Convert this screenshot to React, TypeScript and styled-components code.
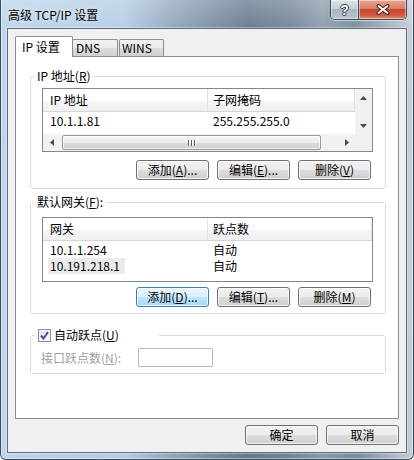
import React from 'react'
import styled, { createGlobalStyle } from 'styled-components'

const uiFont = `"Noto Sans CJK SC", "Noto Sans", sans-serif`

const GlobalStyle = createGlobalStyle`
  html, body {
    margin: 0;
    padding: 0;
  }
  body {
    font-family: ${uiFont};
    font-size: 12px;
    color: #000;
  }
`

const buttonFace = 'linear-gradient(#f2f2f2 0%, #ebebeb 50%, #dddddd 50%, #cfcfcf 100%)'
const buttonHot = 'linear-gradient(#eaf6fd 0%, #d9f0fc 50%, #bee6fd 50%, #a7d9f5 100%)'

// window chrome

const Frame = styled.div`
  width: 414px;
  height: 460px;
  box-sizing: border-box;
  display: flex;
  flex-direction: column;
  border: 1px solid #3c4a58;
  border-top: none;
  border-radius: 0 0 6px 6px;
  background:
    linear-gradient(180deg, rgba(255, 255, 255, 0.25) 0px, rgba(255, 255, 255, 0.05) 28px, rgba(255, 255, 255, 0) 100%),
    linear-gradient(90deg, #bcd4ec 0%, #b3cce5 30%, #90a5ba 42%, #65788c 60%, #718497 70%, #8c9bab 78%, #7b8b9c 86%, #a3b1bf 94%, #c4cfd9 100%);
  box-shadow:
    inset 1px 0 rgba(255, 255, 255, 0.45),
    inset -1px 0 rgba(255, 255, 255, 0.45),
    inset 0 -1px rgba(255, 255, 255, 0.45);
`

const TitleBar = styled.div`
  height: 28px;
  display: flex;
  align-items: flex-start;
  padding-left: 7px;
`

const Title = styled.div`
  margin-top: 7px;
  line-height: 16px;
  font-size: 12px;
  text-shadow: 0 0 6px rgba(255, 255, 255, 0.8);
`

const Captions = styled.div`
  display: flex;
  margin-left: auto;
  margin-right: 6px;
  height: 20px;
  box-sizing: border-box;
  border: 1px solid #3e4a57;
  border-top: none;
  border-radius: 0 0 5px 5px;
  overflow: hidden;
  box-shadow: 0 1px 0 rgba(255, 255, 255, 0.5);
`

const CaptionButton = styled.div<{ $w: number; $bg: string }>`
  width: ${(p) => p.$w}px;
  display: flex;
  align-items: center;
  justify-content: center;
  background: ${(p) => p.$bg};
  box-shadow: inset 0 0 0 1px rgba(255, 255, 255, 0.45);
  & + & {
    border-left: 1px solid #3e4a57;
  }
`

const HelpGlyph = styled.span`
  font-family: "Liberation Sans", Arial, sans-serif;
  font-weight: bold;
  font-size: 14px;
  line-height: 14px;
  color: #fff;
  text-shadow: 1px 0 #2f3a46, -1px 0 #2f3a46, 0 1px #2f3a46, 0 -1px #2f3a46;
`

const Client = styled.div`
  flex: 1;
  margin: 0 6px 6px;
  border: 1px solid #5e6d7d;
  box-shadow: 0 0 0 1px rgba(255, 255, 255, 0.35);
  background: #f0f0f0;
  padding: 7px;
  display: flex;
  flex-direction: column;
`

// tab control

const TabStrip = styled.div`
  display: flex;
  align-items: flex-end;
  height: 20px;
`

const Tab = styled.div<{ $active?: boolean; $w: number; $ml?: number; $pl: number }>`
  position: relative;
  z-index: ${(p) => (p.$active ? 2 : 1)};
  box-sizing: border-box;
  width: ${(p) => p.$w}px;
  height: ${(p) => (p.$active ? 21 : 17)}px;
  margin-left: ${(p) => p.$ml ?? 0}px;
  margin-bottom: ${(p) => (p.$active ? -1 : 0)}px;
  padding: ${(p) => (p.$active ? 2 : 0)}px 0 0 ${(p) => p.$pl}px;
  border: 1px solid #898c95;
  border-bottom: none;
  border-radius: 2px 2px 0 0;
  background: ${(p) => (p.$active ? '#fff' : buttonFace)};
  line-height: 16px;
  white-space: nowrap;
`

const Panel = styled.div`
  flex: 1;
  border: 1px solid #898c95;
  background: #fff;
  padding: 12px 12px 0 14px;
  display: flex;
  flex-direction: column;
`

// group boxes

const Group = styled.fieldset<{ $pad: string; $mt: number }>`
  margin: ${(p) => p.$mt}px 0 0;
  padding: ${(p) => p.$pad};
  border: 1px solid #d5dfe5;
  border-radius: 3px;
  min-width: 0;
`

const Legend = styled.legend<{ $ml: number; $w?: number }>`
  margin-left: ${(p) => p.$ml}px;
  padding: 0 3px;
  line-height: 14px;
  height: 14px;
  box-sizing: border-box;
  ${(p) => (p.$w ? `width: ${p.$w}px;` : '')}
  white-space: nowrap;
`

const LegendCheck = styled.span`
  display: flex;
  align-items: center;
  gap: 3px;
  height: 14px;
`

const CheckBox = styled.span`
  width: 13px;
  height: 13px;
  box-sizing: border-box;
  border: 1px solid #8e8f8f;
  background: linear-gradient(135deg, #dcdcdc, #ffffff);
  box-shadow: inset 0 0 0 1px #f4f4f4;
  display: inline-flex;
  align-items: center;
  justify-content: center;
`

// list views

const ListView = styled.div<{ $h: number; $scroll?: boolean }>`
  height: ${(p) => p.$h}px;
  box-sizing: border-box;
  border: 1px solid #828790;
  background: #fff;
  display: grid;
  grid-template-columns: ${(p) => (p.$scroll ? '1fr 17px' : '1fr')};
  grid-template-rows: ${(p) => (p.$scroll ? '1fr 17px' : '1fr')};
  overflow: hidden;
`

const ListBody = styled.div`
  overflow: hidden;
  min-width: 0;
`

const Header = styled.div`
  display: flex;
  height: 23px;
  box-sizing: border-box;
  border-bottom: 1px solid #d5d5d5;
  background: linear-gradient(#ffffff 0%, #ffffff 55%, #f4f5f7 55%, #eff0f2 100%);
`

const HeaderCell = styled.div<{ $w?: number; $pl: number }>`
  ${(p) => (p.$w ? `width: ${p.$w}px; flex: none;` : 'flex: 1;')}
  box-sizing: border-box;
  padding-left: ${(p) => p.$pl}px;
  line-height: 22px;
  border-right: 1px solid #e3e4e6;
  white-space: nowrap;
`

const Rows = styled.div`
  padding-top: 1px;
`

const Row = styled.div`
  display: flex;
  height: 16px;
  line-height: 16px;
`

const Cell = styled.div<{ $w?: number; $pl: number }>`
  ${(p) => (p.$w ? `width: ${p.$w}px; flex: none;` : 'flex: 1;')}
  box-sizing: border-box;
  padding-left: ${(p) => p.$pl}px;
  white-space: nowrap;
`

const Selected = styled.span`
  display: inline-block;
  margin-left: -2px;
  padding: 0 5px 0 2px;
  background: #ebebeb;
`

const VScroll = styled.div`
  display: flex;
  flex-direction: column;
  justify-content: space-between;
  background: #f1f1f1;
`

const HScroll = styled.div`
  display: flex;
  align-items: center;
  background: #f1f1f1;
`

const ArrowBox = styled.div`
  width: 17px;
  height: 17px;
  flex: none;
  display: flex;
  align-items: center;
  justify-content: center;
`

const Thumb = styled.div`
  width: 259px;
  height: 15px;
  margin-left: 2px;
  box-sizing: border-box;
  border: 1px solid #979797;
  border-radius: 2px;
  background: linear-gradient(#f5f5f5 0%, #ebebeb 50%, #dbdbdb 50%, #d0d0d0 100%);
  box-shadow: inset 0 0 0 1px rgba(255, 255, 255, 0.7);
  display: flex;
  align-items: center;
  justify-content: center;
  gap: 1px;
`

const Grip = styled.span`
  width: 1px;
  height: 6px;
  background: #5f5f5f;
  box-shadow: 1px 0 #fafafa;
  margin-right: 1px;
`

const Spacer = styled.div`
  flex: 1;
`

const Corner = styled.div`
  background: #f0f0f0;
`

// buttons and fields

const ButtonRow = styled.div<{ $mt: number; $pr?: number }>`
  display: flex;
  justify-content: flex-end;
  gap: 8px;
  margin-top: ${(p) => p.$mt}px;
  padding-right: ${(p) => p.$pr ?? 0}px;
`

const Button = styled.button<{ $hot?: boolean }>`
  width: 73px;
  height: 20px;
  box-sizing: border-box;
  padding: 0;
  border: 1px solid ${(p) => (p.$hot ? '#3c7fb1' : '#707070')};
  border-radius: 3px;
  background: ${(p) => (p.$hot ? buttonHot : buttonFace)};
  box-shadow: inset 0 0 0 1px rgba(255, 255, 255, 0.75);
  font-family: ${uiFont};
  font-size: 12px;
  line-height: 16px;
  color: #000;
  white-space: nowrap;
`

const FieldRow = styled.div`
  display: flex;
  align-items: center;
`

const DimLabel = styled.span`
  width: 97px;
  color: #a0a0a0;
  line-height: 16px;
  white-space: nowrap;
`

const DimInput = styled.div`
  width: 75px;
  height: 19px;
  box-sizing: border-box;
  border: 1px solid #b8b8b8;
  border-radius: 2px;
  background: #fff;
`

const Footer = styled.div`
  display: flex;
  justify-content: flex-end;
  gap: 8px;
  margin-top: 6px;
`

// small drawn glyphs

const Arrow: React.FC<{ dir: 'up' | 'down' | 'left' | 'right' }> = ({ dir }) => {
  const pts = {
    up: '0,4 3.5,0 7,4',
    down: '0,0 3.5,4 7,0',
    left: '4,0 0,3.5 4,7',
    right: '0,0 4,3.5 0,7',
  }[dir]
  const vertical = dir === 'up' || dir === 'down'
  return (
    <svg width={vertical ? 7 : 4} height={vertical ? 4 : 7} viewBox={vertical ? '0 0 7 4' : '0 0 4 7'}>
      <polygon points={pts} fill="#4a4a4a" />
    </svg>
  )
}

const CloseIcon = () => (
  <svg width="14" height="11" viewBox="0 0 14 11">
    <path d="M2.5 2 L11.5 9 M11.5 2 L2.5 9" stroke="#3a2420" strokeWidth="4" strokeLinecap="round" />
    <path d="M2.5 2 L11.5 9 M11.5 2 L2.5 9" stroke="#ffffff" strokeWidth="2" strokeLinecap="round" />
  </svg>
)

const CheckMark = () => (
  <svg width="9" height="9" viewBox="0 0 9 9">
    <path d="M1 4.5 L3.5 7.5 L8 1" fill="none" stroke="#3a4f9e" strokeWidth="2" />
  </svg>
)

const Key: React.FC<{ k: string }> = ({ k }) => (
  <>
    (<u>{k}</u>)
  </>
)

const ipColumns = [165, 0]

const App: React.FC = () => (
  <>
    <GlobalStyle />
    <Frame>
      <TitleBar>
        <Title>高级 TCP/IP 设置</Title>
        <Captions>
          <CaptionButton $w={27} $bg="linear-gradient(#dde3ea, #c7cfd8 45%, #a9b5c2 50%, #b9c4cf 100%)">
            <HelpGlyph>?</HelpGlyph>
          </CaptionButton>
          <CaptionButton $w={47} $bg="linear-gradient(#e9a898, #dc7b64 45%, #c8452d 50%, #d05a41 80%, #e28e78 100%)">
            <CloseIcon />
          </CaptionButton>
        </Captions>
      </TitleBar>

      <Client>
        <TabStrip>
          <Tab $active $w={58} $pl={6}>IP 设置</Tab>
          <Tab $w={46} $ml={-1} $pl={3}>DNS</Tab>
          <Tab $w={45} $ml={1} $pl={2}>WINS</Tab>
        </TabStrip>

        <Panel>
          <Group $pad="5px 12px 8px 11px" $mt={0}>
            <Legend $ml={-8}>
              IP 地址<Key k="R" />
            </Legend>
            <ListView $h={64} $scroll>
              <ListBody>
                <Header>
                  <HeaderCell $w={ipColumns[0]} $pl={7}>IP 地址</HeaderCell>
                  <HeaderCell $pl={5}>子网掩码</HeaderCell>
                </Header>
                <Rows>
                  <Row>
                    <Cell $w={ipColumns[0]} $pl={7}>10.1.1.81</Cell>
                    <Cell $pl={5}>255.255.255.0</Cell>
                  </Row>
                </Rows>
              </ListBody>
              <VScroll>
                <ArrowBox><Arrow dir="up" /></ArrowBox>
                <ArrowBox><Arrow dir="down" /></ArrowBox>
              </VScroll>
              <HScroll>
                <ArrowBox><Arrow dir="left" /></ArrowBox>
                <Thumb>
                  <Grip />
                  <Grip />
                  <Grip />
                </Thumb>
                <Spacer />
                <ArrowBox><Arrow dir="right" /></ArrowBox>
              </HScroll>
              <Corner />
            </ListView>
            <ButtonRow $mt={8} $pr={2}>
              <Button>添加<Key k="A" />...</Button>
              <Button>编辑<Key k="E" />...</Button>
              <Button>删除<Key k="V" /></Button>
            </ButtonRow>
          </Group>

          <Group $pad="8px 12px 6px 11px" $mt={6}>
            <Legend $ml={-8}>
              默认网关<Key k="F" />:
            </Legend>
            <ListView $h={65}>
              <ListBody>
                <Header>
                  <HeaderCell $w={ipColumns[0]} $pl={7}>网关</HeaderCell>
                  <HeaderCell $pl={5}>跃点数</HeaderCell>
                </Header>
                <Rows>
                  <Row>
                    <Cell $w={ipColumns[0]} $pl={7}>10.1.1.254</Cell>
                    <Cell $pl={5}>自动</Cell>
                  </Row>
                  <Row>
                    <Cell $w={ipColumns[0]} $pl={7}>
                      <Selected>10.191.218.1</Selected>
                    </Cell>
                    <Cell $pl={5}>自动</Cell>
                  </Row>
                </Rows>
              </ListBody>
            </ListView>
            <ButtonRow $mt={5} $pr={2}>
              <Button $hot>添加<Key k="D" />...</Button>
              <Button>编辑<Key k="T" />...</Button>
              <Button>删除<Key k="M" /></Button>
            </ButtonRow>
          </Group>

          <Group $pad="6px 10px 6px 10px" $mt={14}>
            <Legend $ml={-6} $w={124}>
              <LegendCheck>
                <CheckBox><CheckMark /></CheckBox>
                <span>自动跃点<Key k="U" /></span>
              </LegendCheck>
            </Legend>
            <FieldRow>
              <DimLabel>接口跃点数<Key k="N" />:</DimLabel>
              <DimInput />
            </FieldRow>
          </Group>
        </Panel>

        <Footer>
          <Button>确定</Button>
          <Button>取消</Button>
        </Footer>
      </Client>
    </Frame>
  </>
)

export default App
